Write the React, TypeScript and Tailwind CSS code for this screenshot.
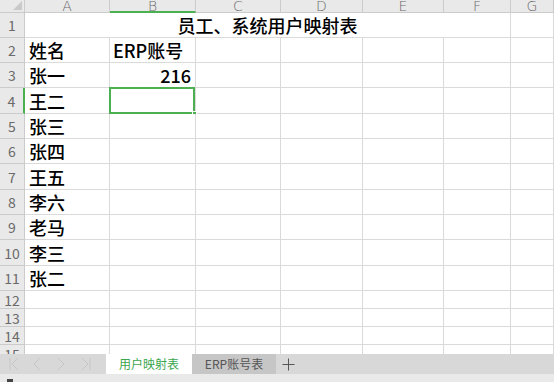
import React from 'react';

const cols = ['A', 'B', 'C', 'D', 'E', 'F', 'G'];
const rowH = [25, 25, 25, 26, 25, 25, 26, 25, 25, 26, 25, 18, 18, 18];
const names = ['张一', '王二', '张三', '张四', '王五', '李六', '老马', '李三', '张二'];

const gridCols = 'grid grid-cols-[25px_85px_86px_85px_82px_81px_67px_43px] grid-rows-[100%]';
const cell = 'border-r border-b border-[#dadada] bg-white min-h-0';
const text = 'text-[18px] leading-[20px] font-medium text-black';
const head = 'border-r border-b border-[#cbcbcb] bg-[#e9e9e9] text-[#6a6a6a] text-[14px] leading-none flex items-center justify-center min-h-0 overflow-hidden';
const cjk = { fontFamily: '"Noto Sans CJK SC", "Noto Sans", sans-serif' };

const RowHead = ({ n, active }: { n: number; active?: boolean }) => (
  <div className={`${head} ${active ? 'border-r-[#4caf50] border-r-2 text-[#3c9a4a]' : ''}`}>{n}</div>
);

const App = () => {
  return (
    <div className="w-[554px] h-[382px] overflow-hidden bg-white flex flex-col" style={{ fontFamily: '"Liberation Sans", Arial, sans-serif' }}>
      <div className="h-[354px] overflow-hidden" style={cjk}>
        {/* column headers */}
        <div className={`${gridCols} h-[13px]`}>
          <div className={`${head} relative`}>
            <svg className="absolute right-[2px] bottom-[2px]" width="9" height="9" viewBox="0 0 9 9">
              <polygon points="9,0 9,9 0,9" fill="#c9c9c9" />
            </svg>
          </div>
          {cols.map((c) => (
            <div
              key={c}
              className={`${head} text-[12px] ${c === 'B' ? 'border-b-2 border-b-[#4caf50] bg-[#dcdcdc] text-[#3c9a4a]' : ''}`}
              style={{ fontFamily: '"DejaVu Sans", sans-serif', fontWeight: 300 }}
            >
              {c}
            </div>
          ))}
        </div>

        {/* row 1: merged title */}
        <div className={gridCols} style={{ height: rowH[0] }}>
          <RowHead n={1} />
          <div className={`${cell} ${text} col-span-6 flex items-center justify-center`}>
            员工、系统用户映射表
          </div>
          <div className={cell} />
        </div>

        {/* row 2 */}
        <div className={gridCols} style={{ height: rowH[1] }}>
          <RowHead n={2} />
          <div className={`${cell} ${text} flex items-center pl-[4px]`}>姓名</div>
          <div className={`${cell} ${text} flex items-center pl-[3px]`}>ERP账号</div>
          {cols.slice(2).map((c) => (
            <div key={c} className={cell} />
          ))}
        </div>

        {/* rows 3..11 */}
        {names.map((name, i) => {
          const r = i + 3;
          return (
            <div key={r} className={gridCols} style={{ height: rowH[r - 1] }}>
              <RowHead n={r} active={r === 4} />
              <div className={`${cell} ${text} flex items-center pl-[4px]`}>{name}</div>
              <div className={`${cell} ${text} relative flex items-center justify-end pr-[4px]`}>
                {r === 3 ? '216' : ''}
                {r === 4 && (
                  <div className="absolute -left-px -top-px w-[86px] h-[27px] border-2 border-[#4caf50]">
                    <div className="absolute -right-[4px] -bottom-[4px] w-[5px] h-[5px] bg-[#4caf50] border border-white" />
                  </div>
                )}
              </div>
              {cols.slice(2).map((c) => (
                <div key={c} className={cell} />
              ))}
            </div>
          );
        })}

        {/* rows 12..15 */}
        {[12, 13, 14, 15].map((r) => (
          <div key={r} className={gridCols} style={{ height: rowH[r - 1] ?? 18 }}>
            <RowHead n={r} />
            {cols.map((c) => (
              <div key={c} className={cell} />
            ))}
          </div>
        ))}
      </div>

      {/* sheet tab bar */}
      <div className="h-[20px] bg-[#d8d8d8] flex items-stretch">
        <div className="w-[106px] flex items-center">
          <svg width="100" height="20" viewBox="0 0 100 20" fill="none" stroke="#c6c6c6" strokeWidth="1">
            <path d="M10 4 V16 M18 4 L12 10 L18 16" />
            <path d="M40 4 L34 10 L40 16" />
            <path d="M58 4 L64 10 L58 16" />
            <path d="M82 4 L88 10 L82 16 M90 4 V16" />
          </svg>
        </div>
        <div className="w-[86px] bg-white flex items-center justify-center text-[12px] text-[#3aa64e]" style={cjk}>
          用户映射表
        </div>
        <div className="w-[84px] bg-[#c6c6c6] flex items-center justify-center text-[12px] text-[#555]" style={cjk}>
          ERP账号表
        </div>
        <div className="w-[24px] flex items-center justify-center">
          <svg width="13" height="13" viewBox="0 0 13 13" stroke="#555" strokeWidth="1">
            <path d="M6.5 0.5 V12.5 M0.5 6.5 H12.5" />
          </svg>
        </div>
      </div>

      {/* status bar */}
      <div className="h-[8px] bg-[#e9e9e9] relative">
        <div className="absolute left-[7px] top-[5px] w-[6px] h-[3px] bg-[#444]" />
      </div>
    </div>
  );
};

export default App;
